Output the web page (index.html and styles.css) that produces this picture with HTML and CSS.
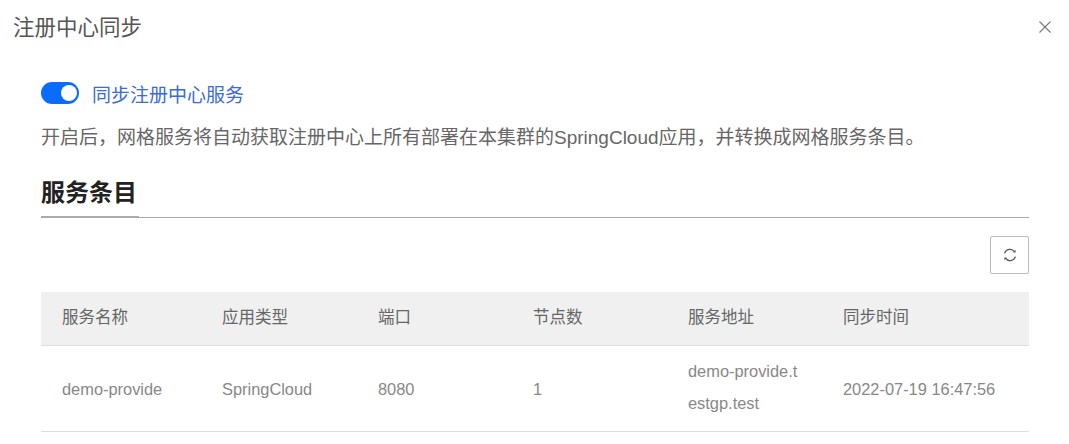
FILE: index.html
```html
<!DOCTYPE html>
<html lang="zh-CN">
<head>
    <meta charset="UTF-8">
    <meta name="viewport" content="width=device-width, initial-scale=1.0">
    <title>注册中心同步</title>
    <link rel="stylesheet" href="styles.css">
</head>
<body>
    <div class="header">
        <span class="header-title">注册中心同步</span>
        <svg class="close-icon" width="14" height="14" viewBox="0 0 14 14">
            <path d="M1.5 1.5l11 11M12.5 1.5l-11 11" stroke="#777" stroke-width="1.1" fill="none"/>
        </svg>
    </div>
    <div class="content">
        <div class="switch-row">
            <span class="switch"><span class="switch-knob"></span></span>
            <span class="switch-label">同步注册中心服务</span>
        </div>
        <p class="hint">开启后，网格服务将自动获取注册中心上所有部署在本集群的SpringCloud应用，并转换成网格服务条目。</p>
        <div class="tabs">
            <h2 class="tab-active">服务条目</h2>
        </div>
        <div class="toolbar">
            <button class="refresh-btn" aria-label="刷新">
                <svg width="16" height="16" viewBox="0 0 14 14" fill="none">
                    <path d="M2.3 5.6A4.9 4.9 0 0 1 11 4.2" stroke="#555" stroke-width="1.1"/>
                    <path d="M11.7 8.4A4.9 4.9 0 0 1 3 9.8" stroke="#555" stroke-width="1.1"/>
                    <path d="M9.6 4.7l2.2.2.2-2.2z" fill="#444"/>
                    <path d="M4.4 9.3l-2.2-.2-.2 2.2z" fill="#444"/>
                </svg>
            </button>
        </div>
        <table class="service-table">
            <colgroup>
                <col class="col-name">
                <col class="col-type">
                <col class="col-std">
                <col class="col-std">
                <col class="col-std">
                <col>
            </colgroup>
            <thead>
                <tr>
                    <th>服务名称</th>
                    <th>应用类型</th>
                    <th>端口</th>
                    <th>节点数</th>
                    <th>服务地址</th>
                    <th>同步时间</th>
                </tr>
            </thead>
            <tbody>
                <tr>
                    <td>demo-provide</td>
                    <td>SpringCloud</td>
                    <td>8080</td>
                    <td>1</td>
                    <td class="cell-wrap">demo-provide.testgp.test</td>
                    <td>2022-07-19 16:47:56</td>
                </tr>
            </tbody>
        </table>
    </div>
</body>
</html>
```

FILE: styles.css
```css
body {
    font-family: "Liberation Sans", Arial, "Noto Sans CJK SC", sans-serif;
    background-color: #fff;
    color: #333;
    margin: 0;
    padding: 0;
}
.header {
    display: flex;
    justify-content: space-between;
    align-items: center;
    height: 54px;
    padding: 0 17px 0 13px;
}
.header-title {
    margin-bottom: 4px;
    font-size: 21.5px;
    color: #555;
}
.close-icon {
    display: block;
}
.content {
    padding: 25px 40px 0 41px;
}
.switch-row {
    display: flex;
    align-items: center;
    gap: 13px;
    height: 28px;
}
.switch {
    display: flex;
    justify-content: flex-end;
    align-items: center;
    box-sizing: border-box;
    width: 38px;
    height: 22px;
    padding-right: 2px;
    border-radius: 11px;
    background-color: #0a6cff;
}
.switch-knob {
    width: 16px;
    height: 16px;
    border-radius: 50%;
    background-color: #fff;
}
.switch-label {
    font-size: 19px;
    color: #3a6bd6;
}
.hint {
    margin: 16px 0 0;
    font-size: 19px;
    line-height: 30px;
    color: #666;
}
.tabs {
    height: 45px;
    margin-top: 19px;
    border-bottom: 1px solid #aaa;
}
.tab-active {
    box-sizing: border-box;
    width: 98px;
    height: 46px;
    margin: 0;
    font-size: 24px;
    line-height: 42px;
    font-weight: bold;
    color: #222;
    border-bottom: 2px solid #aaa;
}
.toolbar {
    display: flex;
    justify-content: flex-end;
    margin-top: 18px;
}
.refresh-btn {
    display: flex;
    justify-content: center;
    align-items: center;
    box-sizing: border-box;
    width: 39px;
    height: 38px;
    padding: 0;
    border: 1px solid #bbb;
    border-radius: 2px;
    background-color: #fff;
}
.service-table {
    width: 100%;
    margin-top: 18px;
    border-collapse: collapse;
    table-layout: fixed;
}
.col-name {
    width: 160px;
}
.col-type {
    width: 156px;
}
.col-std {
    width: 155px;
}
.service-table th {
    height: 53px;
    padding: 0 21px 4px;
    box-sizing: border-box;
    text-align: left;
    font-size: 16.5px;
    font-weight: normal;
    color: #666;
    background-color: #f0f0f0;
    border-bottom: 1px solid #ddd;
}
.service-table td {
    height: 86px;
    padding: 2px 21px 0;
    box-sizing: border-box;
    font-size: 16.4px;
    line-height: 32px;
    color: #888;
    border-bottom: 1px solid #ddd;
}
.service-table .cell-wrap {
    padding-bottom: 4px;
    word-break: break-all;
}
```
